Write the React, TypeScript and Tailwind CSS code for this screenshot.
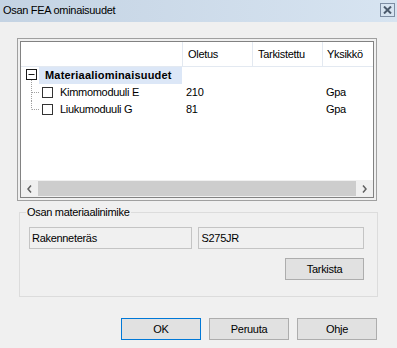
export default function App() {
  return (
    <div className="w-[397px] h-[348px] bg-[#f0f0f0] flex flex-col overflow-hidden font-['Liberation_Sans',Arial,sans-serif] text-[11px] leading-none tracking-[-0.3px] text-black">
      <TitleBar title="Osan FEA ominaisuudet" />

      <div className="flex flex-col pl-[17px]">
        <PropertyList />
        <MaterialGroup />

        {/* Dialog buttons */}
        <div className="flex justify-end gap-[8px] pr-[20px] mt-[21px]">
          <Button label="OK" primary />
          <Button label="Peruuta" />
          <Button label="Ohje" />
        </div>
      </div>
    </div>
  )
}

function TitleBar({ title }: { title: string }) {
  return (
    <div className="h-[22px] shrink-0 flex items-start justify-between pl-[3px] pr-[2px] bg-gradient-to-r from-[#c4d3e3] to-[#d7e4f1]">
      <span className="pt-[5px]">{title}</span>
      <div className="mt-[3px] w-[15px] h-[14px] border border-[#7d8da3] flex items-center justify-center">
        <svg width="9" height="8" viewBox="0 0 9 8">
          <path d="M1 0.5 L8 7.5 M8 0.5 L1 7.5" stroke="#4b5a6c" strokeWidth="2" />
        </svg>
      </div>
    </div>
  )
}

const columns = [
  { label: 'Oletus', width: 'w-[70px]' },
  { label: 'Tarkistettu', width: 'w-[70px]' },
]

const rows = [
  { name: 'Kimmomoduuli E', value: '210', unit: 'Gpa', last: false },
  { name: 'Liukumoduuli G', value: '81', unit: 'Gpa', last: true },
]

function PropertyList() {
  return (
    <div className="mt-[16px] w-[360px] h-[163px] border border-[#a0a0a0] p-[2px]">
      <div className="h-full border border-[#828282] bg-white flex flex-col overflow-hidden">
        {/* Header */}
        <div className="h-[25px] shrink-0 flex border-b border-[#e3e9f1]">
          <div className="w-[162px] border-r border-[#e3e9f1]" />
          {columns.map((c) => (
            <div key={c.label} className={`${c.width} border-r border-[#e3e9f1] pl-[5px] flex items-center`}>
              {c.label}
            </div>
          ))}
          <div className="flex-1 pl-[4px] flex items-center whitespace-nowrap overflow-hidden">Yksikkö</div>
        </div>

        {/* Category row */}
        <div className="h-[17px] flex">
          <div className="w-[161px] flex">
            <svg width="18" height="17" viewBox="0 0 18 17" className="shrink-0">
              <rect x="5.5" y="2.5" width="10" height="10" fill="white" stroke="#1a1a1a" />
              <path d="M7.5 7.5 H13.5" stroke="#1a1a1a" />
              <path d="M10.5 13 V17" stroke="#a0a0a0" strokeDasharray="1 1" />
            </svg>
            <div className="flex-1 bg-[#dce7f7] pl-[6px] flex items-center font-bold tracking-[0.2px]">
              Materiaaliominaisuudet
            </div>
          </div>
        </div>

        {rows.map((r) => (
          <div key={r.name} className="h-[17px] flex">
            <div className="w-[162px] flex items-center">
              <svg width="21" height="17" viewBox="0 0 21 17" className="shrink-0">
                <path d={r.last ? 'M10.5 0 V8.5' : 'M10.5 0 V17'} stroke="#a0a0a0" strokeDasharray="1 1" />
                <path d="M11 8.5 H18" stroke="#a0a0a0" strokeDasharray="1 1" />
              </svg>
              <div className="w-[11px] h-[11px] border border-[#333333] bg-white shrink-0" />
              <span className="pl-[7px]">{r.name}</span>
            </div>
            <div className="w-[70px] pl-[3px] flex items-center">{r.value}</div>
            <div className="w-[70px]" />
            <div className="flex-1 pl-[3px] flex items-center">{r.unit}</div>
          </div>
        ))}

        <div className="flex-1" />

        {/* Horizontal scrollbar */}
        <div className="h-[17px] shrink-0 flex bg-[#f0f0f0]">
          <div className="w-[17px] flex items-center justify-center">
            <svg width="5" height="8" viewBox="0 0 5 8">
              <path d="M4 0.5 L1 4 L4 7.5" stroke="#606060" strokeWidth="1.5" fill="none" />
            </svg>
          </div>
          <div className="flex-1 bg-[#cdcdcd] my-[1px]" />
          <div className="w-[17px] flex items-center justify-center">
            <svg width="5" height="8" viewBox="0 0 5 8">
              <path d="M1 0.5 L4 4 L1 7.5" stroke="#606060" strokeWidth="1.5" fill="none" />
            </svg>
          </div>
        </div>
      </div>
    </div>
  )
}

function MaterialGroup() {
  return (
    <div className="relative mt-[11px] ml-[2px] w-[359px] h-[85px] border border-[#dcdcdc] flex flex-col pt-[14px] pl-[9px] pr-[13px]">
      <span className="absolute -top-[6px] left-[6px] bg-[#f0f0f0] px-[1px]">Osan materiaalinimike</span>
      <div className="flex gap-[6px]">
        <div className="w-[163px] h-[22px] border border-[#c4c4c4] flex items-center pl-[2px]">Rakenneteräs</div>
        <div className="w-[167px] h-[22px] border border-[#c4c4c4] flex items-center pl-[3px]">S275JR</div>
      </div>
      <div className="flex justify-end mt-[9px]">
        <Button label="Tarkista" width="w-[79px]" />
      </div>
    </div>
  )
}

function Button({ label, primary, width }: { label: string; primary?: boolean; width?: string }) {
  return (
    <div
      className={cn(
        'h-[22px] flex items-center justify-center bg-[#e1e1e1] border',
        primary ? 'border-[#0078d7]' : 'border-[#adadad]',
        width ?? 'w-[80px]'
      )}
    >
      {label}
    </div>
  )
}

function cn(...inputs: any[]) {
  return inputs.filter(Boolean).join(' ')
}
